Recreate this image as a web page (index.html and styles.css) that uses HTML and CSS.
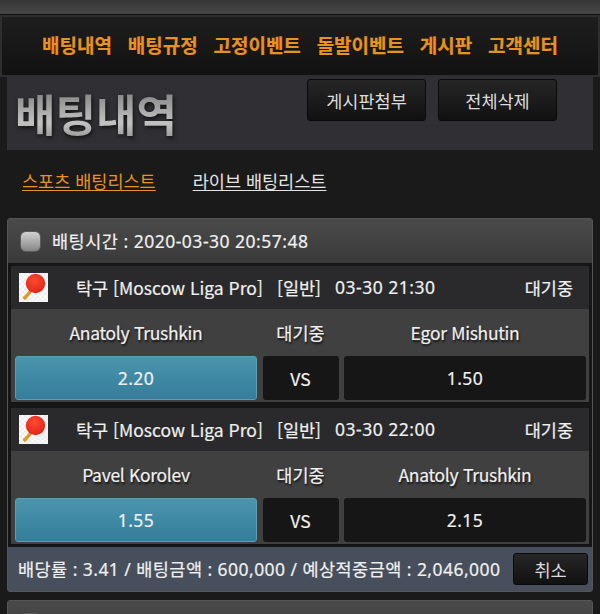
FILE: index.html
```html
<!DOCTYPE html>
<html lang="ko">
<head>
<meta charset="utf-8">
<title>배팅내역</title>
<link rel="stylesheet" href="styles.css">
</head>
<body>
<svg class="defs" width="0" height="0" aria-hidden="true">
  <defs>
    <pattern id="chk" width="5" height="5" patternUnits="userSpaceOnUse">
      <rect width="5" height="5" fill="#fbfbfb"/>
      <rect width="2.5" height="2.5" fill="#eeeeee"/>
      <rect x="2.5" y="2.5" width="2.5" height="2.5" fill="#eeeeee"/>
    </pattern>
    <radialGradient id="paddle" cx="0.45" cy="0.35" r="0.7">
      <stop offset="0" stop-color="#ff4a30"/>
      <stop offset="1" stop-color="#dd2218"/>
    </radialGradient>
    <symbol id="tt" viewBox="0 0 29 29">
      <rect width="29" height="29" fill="url(#chk)"/>
      <path d="M4 24 C7 21.5 9 19 11 15.5 L14 18 C12 20.5 9.5 23 7 26.5 L5.5 26.8 L3.8 25.5 Z" fill="#e09a2c"/>
      <circle cx="16.5" cy="10.5" r="9.7" fill="url(#paddle)"/>
    </symbol>
  </defs>
</svg>
<div class="topbar"></div>
<nav class="nav">
  <a>배팅내역</a><a>배팅규정</a><a>고정이벤트</a><a>돌발이벤트</a><a>게시판</a><a>고객센터</a>
</nav>
<header class="title">
  <h1>배팅내역</h1>
  <div class="title-btns">
    <button class="btn btn-wide">게시판첨부</button>
    <button class="btn btn-wide">전체삭제</button>
  </div>
</header>
<div class="tabs">
  <a class="tab tab-on">스포츠 배팅리스트</a>
  <a class="tab">라이브 배팅리스트</a>
</div>
<section class="card">
  <div class="card-head"><span class="check"></span><span class="num">배팅시간 : 2020-03-30 20:57:48</span></div>
  <div class="games">
    <article class="game">
      <div class="game-info">
        <svg class="sport" width="29" height="29"><use href="#tt"/></svg>
        <span class="league">탁구 [Moscow Liga Pro]</span>
        <span class="kind">[일반]</span>
        <span class="when num">03-30 21:30</span>
        <span class="state">대기중</span>
      </div>
      <div class="teams"><span class="team">Anatoly Trushkin</span><span>대기중</span><span class="team">Egor Mishutin</span></div>
      <div class="odds"><div class="odd odd-on num">2.20</div><div class="odd">VS</div><div class="odd num">1.50</div></div>
    </article>
    <article class="game">
      <div class="game-info">
        <svg class="sport" width="29" height="29"><use href="#tt"/></svg>
        <span class="league">탁구 [Moscow Liga Pro]</span>
        <span class="kind">[일반]</span>
        <span class="when num">03-30 22:00</span>
        <span class="state">대기중</span>
      </div>
      <div class="teams"><span class="team">Pavel Korolev</span><span>대기중</span><span class="team">Anatoly Trushkin</span></div>
      <div class="odds"><div class="odd odd-on num">1.55</div><div class="odd">VS</div><div class="odd num">2.15</div></div>
    </article>
  </div>
  <div class="summary">
    <span class="num sum-text">배당률 : 3.41 / 배팅금액 : 600,000 / 예상적중금액 : 2,046,000</span>
    <button class="btn btn-cancel">취소</button>
  </div>
</section>
<section class="card card-next">
  <div class="card-head"><span class="check"></span></div>
</section>
</body>
</html>
```
FILE: styles.css
```css
* { box-sizing: border-box; }
html, body { margin: 0; height: 614px; overflow: hidden; }
body {
  background: #1a1a1a;
  color: #f0f0f0;
  font-family: "Noto Sans CJK KR", "Noto Sans", sans-serif;
  font-size: 17.5px;
  font-weight: 400;
  line-height: 1.2;
  -webkit-text-stroke: 0.2px currentColor;
}
.num { font-family: "Noto Sans", "Noto Sans CJK KR", sans-serif; letter-spacing: 0.5px; }
.defs { position: absolute; }
.topbar {
  height: 15px;
  background: linear-gradient(#383838, #464646);
  border-bottom: 1px solid #111;
}
.nav {
  height: 62px;
  display: flex;
  gap: 15.8px;
  align-items: center;
  padding: 0 0 1px 40px;
  background: linear-gradient(#1e1e1e, #121212);
  border: 2px solid #2e2e2e;
  color: #e8921f;
  font-size: 19px;
  font-weight: 700;
}
.title {
  height: 73px;
  margin: 0 7px;
  background: #303034;
  display: flex;
  justify-content: space-between;
  align-items: flex-start;
  padding: 2px 36px 0 8px;
}
.title h1 {
  margin: 9px 0 0;
  font-size: 44px;
  line-height: 50px;
  font-weight: 700;
  -webkit-text-stroke: 0;
  background: linear-gradient(#7d7d7d, #c2c2c2 70%, #9a9a9a);
  -webkit-background-clip: text;
  background-clip: text;
  color: transparent;
  filter: drop-shadow(1px 2px 2px #111);
}
.title-btns { display: flex; gap: 12px; }
.btn {
  font: inherit;
  color: #dcdcdc;
  background: linear-gradient(#262626, #111);
  border: 1px solid #0a0a0a;
  border-radius: 3px;
  padding: 0;
  -webkit-text-stroke: 0;
}
.btn-wide { width: 119px; height: 42px; }
.tabs {
  height: 68px;
  display: flex;
  gap: 37px;
  align-items: center;
  padding: 0 0 6px 22px;
  -webkit-text-stroke: 0;
}
.tab {
  color: #e4e4e4;
  line-height: 20px;
  text-decoration: underline;
  text-decoration-thickness: 1px;
  text-underline-offset: 2px;
}
.tab-on { color: #e8921f; }
.card {
  margin: 0 7px;
  height: 374px;
  background: #3a3a3a;
  border: 1px solid #555;
  border-radius: 3px;
  display: flex;
  flex-direction: column;
  box-shadow: inset 0 0 0 1px #3a3a3a;
}
.card-next { margin-top: 8px; height: 60px; }
.card-head {
  height: 44px;
  flex: none;
  display: flex;
  align-items: center;
  gap: 11px;
  padding-left: 12px;
  background: linear-gradient(#4a4a4a, #3a3a3a);
}
.check {
  width: 21px;
  height: 21px;
  flex: none;
  border-radius: 6px;
  background: linear-gradient(#d2d2d2, #868686);
  border: 1px solid #5c5c5c;
}
.games {
  background: #161616;
  padding: 3px;
  display: flex;
  flex-direction: column;
  gap: 6px;
  flex: none;
}
.game { background: #404040; padding-bottom: 2px; }
.game-info {
  height: 43px;
  background: #2a2a2c;
  display: flex;
  align-items: center;
  padding-left: 8px;
}
.sport { flex: none; margin-right: 28px; }
.league { width: 201px; }
.kind { width: 58px; }
.when { flex: 1; }
.state { margin-right: 16px; }
.teams {
  height: 47px;
  display: grid;
  grid-template-columns: 242px 75px 242px;
  column-gap: 6px;
  padding: 0 3px 0 4px;
  align-items: center;
  text-align: center;
  text-shadow: 1px 2px 2px #111;
}
.team { letter-spacing: -0.3px; }
.odds {
  display: grid;
  grid-template-columns: 242px 76px 242px;
  column-gap: 5.5px;
  padding: 0 3px 0 4px;
}
.odd {
  height: 44px;
  background: #161616;
  border-radius: 3px;
  display: flex;
  align-items: center;
  justify-content: center;
}
.odd-on { background: linear-gradient(#4a95ae, #357d9b); border: 1px solid #5a9fb5; }
.summary {
  flex: 1;
  background: #474f5c;
  display: flex;
  align-items: center;
  justify-content: space-between;
  padding: 0 4px 0 10px;
}
.sum-text { letter-spacing: 0.45px; }
.btn-cancel { width: 75px; height: 32px; }
```
